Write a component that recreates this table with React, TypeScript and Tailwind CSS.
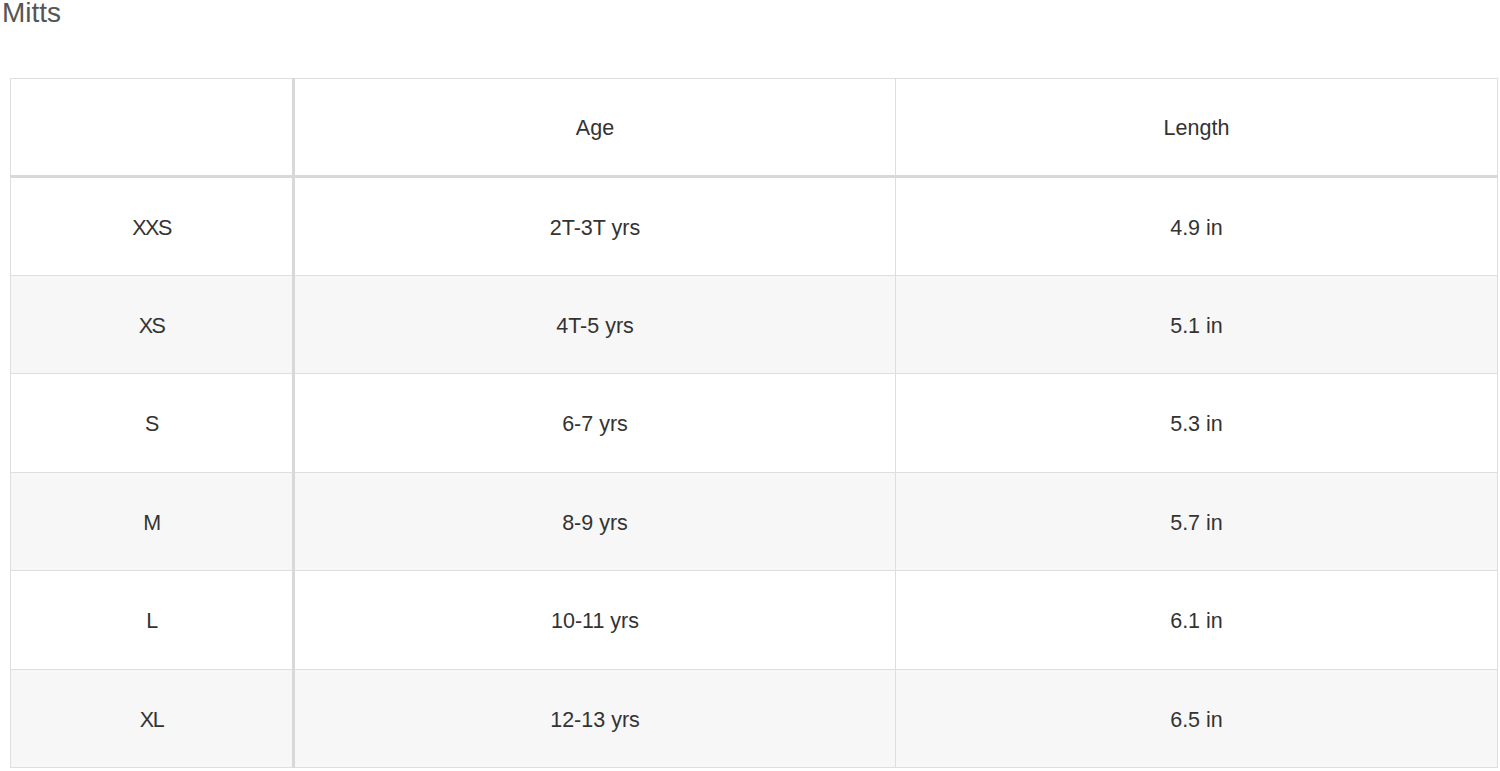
const rows = [
  { size: 'XXS', age: '2T-3T yrs', length: '4.9 in' },
  { size: 'XS', age: '4T-5 yrs', length: '5.1 in' },
  { size: 'S', age: '6-7 yrs', length: '5.3 in' },
  { size: 'M', age: '8-9 yrs', length: '5.7 in' },
  { size: 'L', age: '10-11 yrs', length: '6.1 in' },
  { size: 'XL', age: '12-13 yrs', length: '6.5 in' },
];

export default function App() {
  return (
    <div className="min-h-screen bg-white font-['Liberation_Sans',Arial,sans-serif]">
      <h2 className="pl-[2px] text-[28px] leading-[26px] font-normal text-[#555]">Mitts</h2>

      <div className="mt-[52px] pl-[10px]">
        <table className="w-[1487px] table-fixed border-collapse text-[21.5px] text-[#333]">
          <colgroup>
            <col className="w-[283px]" />
            <col className="w-[602px]" />
            <col className="w-[602px]" />
          </colgroup>
          <thead>
            <tr className="h-[98px] border-b-[3px] border-[#d8d8d8]">
              <th className="border border-[#dedede] border-r-[3px] border-r-[#d8d8d8] pt-[3px] font-normal" />
              <th className="border border-[#dedede] pt-[3px] font-normal">Age</th>
              <th className="border border-[#dedede] pt-[3px] font-normal">Length</th>
            </tr>
          </thead>
          <tbody>
            {rows.map((r, i) => (
              <tr key={r.size} className={`h-[98.5px] ${i % 2 === 1 ? 'bg-[#f7f7f7]' : 'bg-white'}`}>
                <td className="border border-[#dedede] border-r-[3px] border-r-[#d8d8d8] pt-[3px] text-center tracking-[-1.5px]">
                  {r.size}
                </td>
                <td className="border border-[#dedede] pt-[3px] text-center">{r.age}</td>
                <td className="border border-[#dedede] pt-[3px] text-center">{r.length}</td>
              </tr>
            ))}
          </tbody>
        </table>
      </div>
    </div>
  );
}
